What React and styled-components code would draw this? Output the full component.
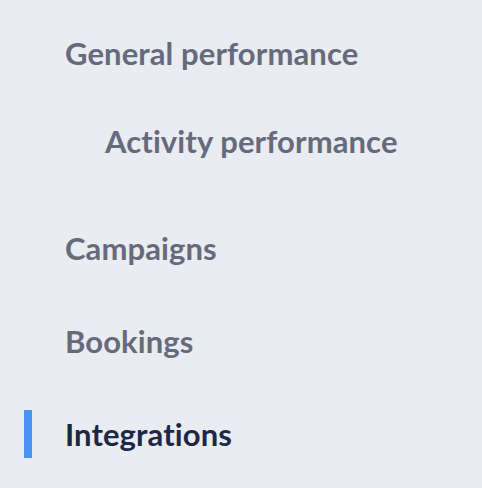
import styled, { createGlobalStyle } from "styled-components";

const GlobalStyle = createGlobalStyle`
    body {
        margin: 0;
        background: #e9ecf0;
        font-family: Lato, "Noto Sans", sans-serif;
    }
`;

const Nav = styled.nav`
    display: flex;
    flex-direction: column;
    padding-top: 29px;
    width: 482px;
    height: 488px;
    box-sizing: border-box;
`;

const Group = styled.div`
    display: flex;
    flex-direction: column;
    gap: 40px;
    margin-bottom: 59px;
`;

const List = styled.div`
    display: flex;
    flex-direction: column;
    gap: 45px;
`;

const Item = styled.a`
    position: relative;
    display: flex;
    align-items: center;
    height: 48px;
    padding-left: ${(p) => (p.$sub ? "105px" : "65px")};
    font-size: 31px;
    font-weight: 700;
    letter-spacing: 0.1px;
    color: ${(p) => (p.$active ? "#1d2849" : "#666a7d")};
    text-decoration: none;
    cursor: pointer;
    ${(p) =>
        p.$active &&
        `
        &::before {
            content: "";
            position: absolute;
            left: 24px;
            top: 0;
            width: 8px;
            height: 48px;
            background: #4a90f5;
        }
    `}
`;

const App = () => {
  return (
    <Nav>
        <GlobalStyle />
        <Group>
            <Item>General performance</Item>
            <Item $sub>Activity performance</Item>
        </Group>
        <List>
            <Item>Campaigns</Item>
            <Item>Bookings</Item>
            <Item $active>Integrations</Item>
        </List>
    </Nav>
  )
}

export default App
